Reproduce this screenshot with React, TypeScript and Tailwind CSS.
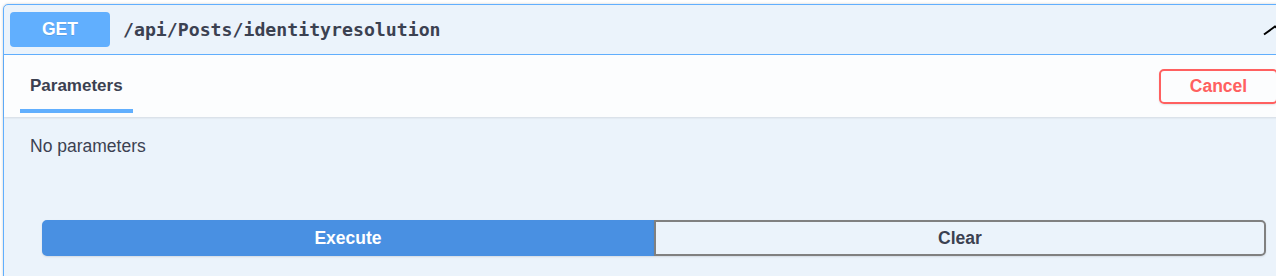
import React from 'react';

const App: React.FC = () => {
  return (
    <div className="w-[1276px] h-[276px] overflow-hidden bg-white font-['Liberation_Sans',Arial,sans-serif] text-[#3b4151]">
      <div className="ml-[3px] mt-[4px] w-[1302px] border border-[#61affe] rounded-[5px] bg-[#ebf3fb] shadow-[0_0_3px_rgba(0,0,0,0.19)]">
        {/* summary */}
        <div className="flex items-center border-b border-[#61affe] px-[6px] py-[7px]">
          <div className="flex h-[35px] w-[100px] items-center justify-center rounded-[4px] bg-[#61affe] text-[17.5px] font-bold text-white [text-shadow:0_1px_0_rgba(0,0,0,0.1)]">
            GET
          </div>
          <div className="flex-1 pl-[13px] font-['DejaVu_Sans_Mono',monospace] text-[18.2px] font-bold text-[#3b4151]">
            /api/Posts/identityresolution
          </div>
          <svg className="mr-[10px]" width="28" height="25" viewBox="0 0 28 25" fill="none">
            <polyline points="4,17.5 15,9.5 26,17.5" stroke="#000" strokeWidth="2" />
          </svg>
        </div>

        {/* section header */}
        <div className="flex h-[62px] items-stretch justify-between bg-[#fcfdfe] pl-[16px] pr-[26px] shadow-[0_1px_2px_rgba(0,0,0,0.1)]">
          <div className="relative flex items-center px-[10px]">
            <span className="text-[17px] font-bold">Parameters</span>
            <div className="absolute bottom-[4px] left-0 right-0 h-[4px] bg-[#61affe]" />
          </div>
          <div className="flex items-center">
            <button className="h-[35px] w-[119px] rounded-[5px] border-2 border-[#ff6060] bg-transparent text-[17.5px] font-bold text-[#ff6060] shadow-[0_1px_2px_rgba(0,0,0,0.1)]">
              Cancel
            </button>
          </div>
        </div>

        {/* body */}
        <div className="pt-[19px] pb-[30px]">
          <p className="pl-[26px] text-[17.5px] leading-[20px]">No parameters</p>
          <div className="mt-[64px] flex px-[38px]">
            <button className="h-[36px] flex-1 rounded-l-[5px] border-2 border-[#4990e2] bg-[#4990e2] text-[17.5px] font-bold text-white shadow-[0_1px_2px_rgba(0,0,0,0.1)]">
              Execute
            </button>
            <button className="h-[36px] flex-1 rounded-r-[5px] border-2 border-[#808080] bg-transparent text-[17.5px] font-bold text-[#3b4151] shadow-[0_1px_2px_rgba(0,0,0,0.1)]">
              Clear
            </button>
          </div>
        </div>
      </div>
    </div>
  );
};

export default App;
